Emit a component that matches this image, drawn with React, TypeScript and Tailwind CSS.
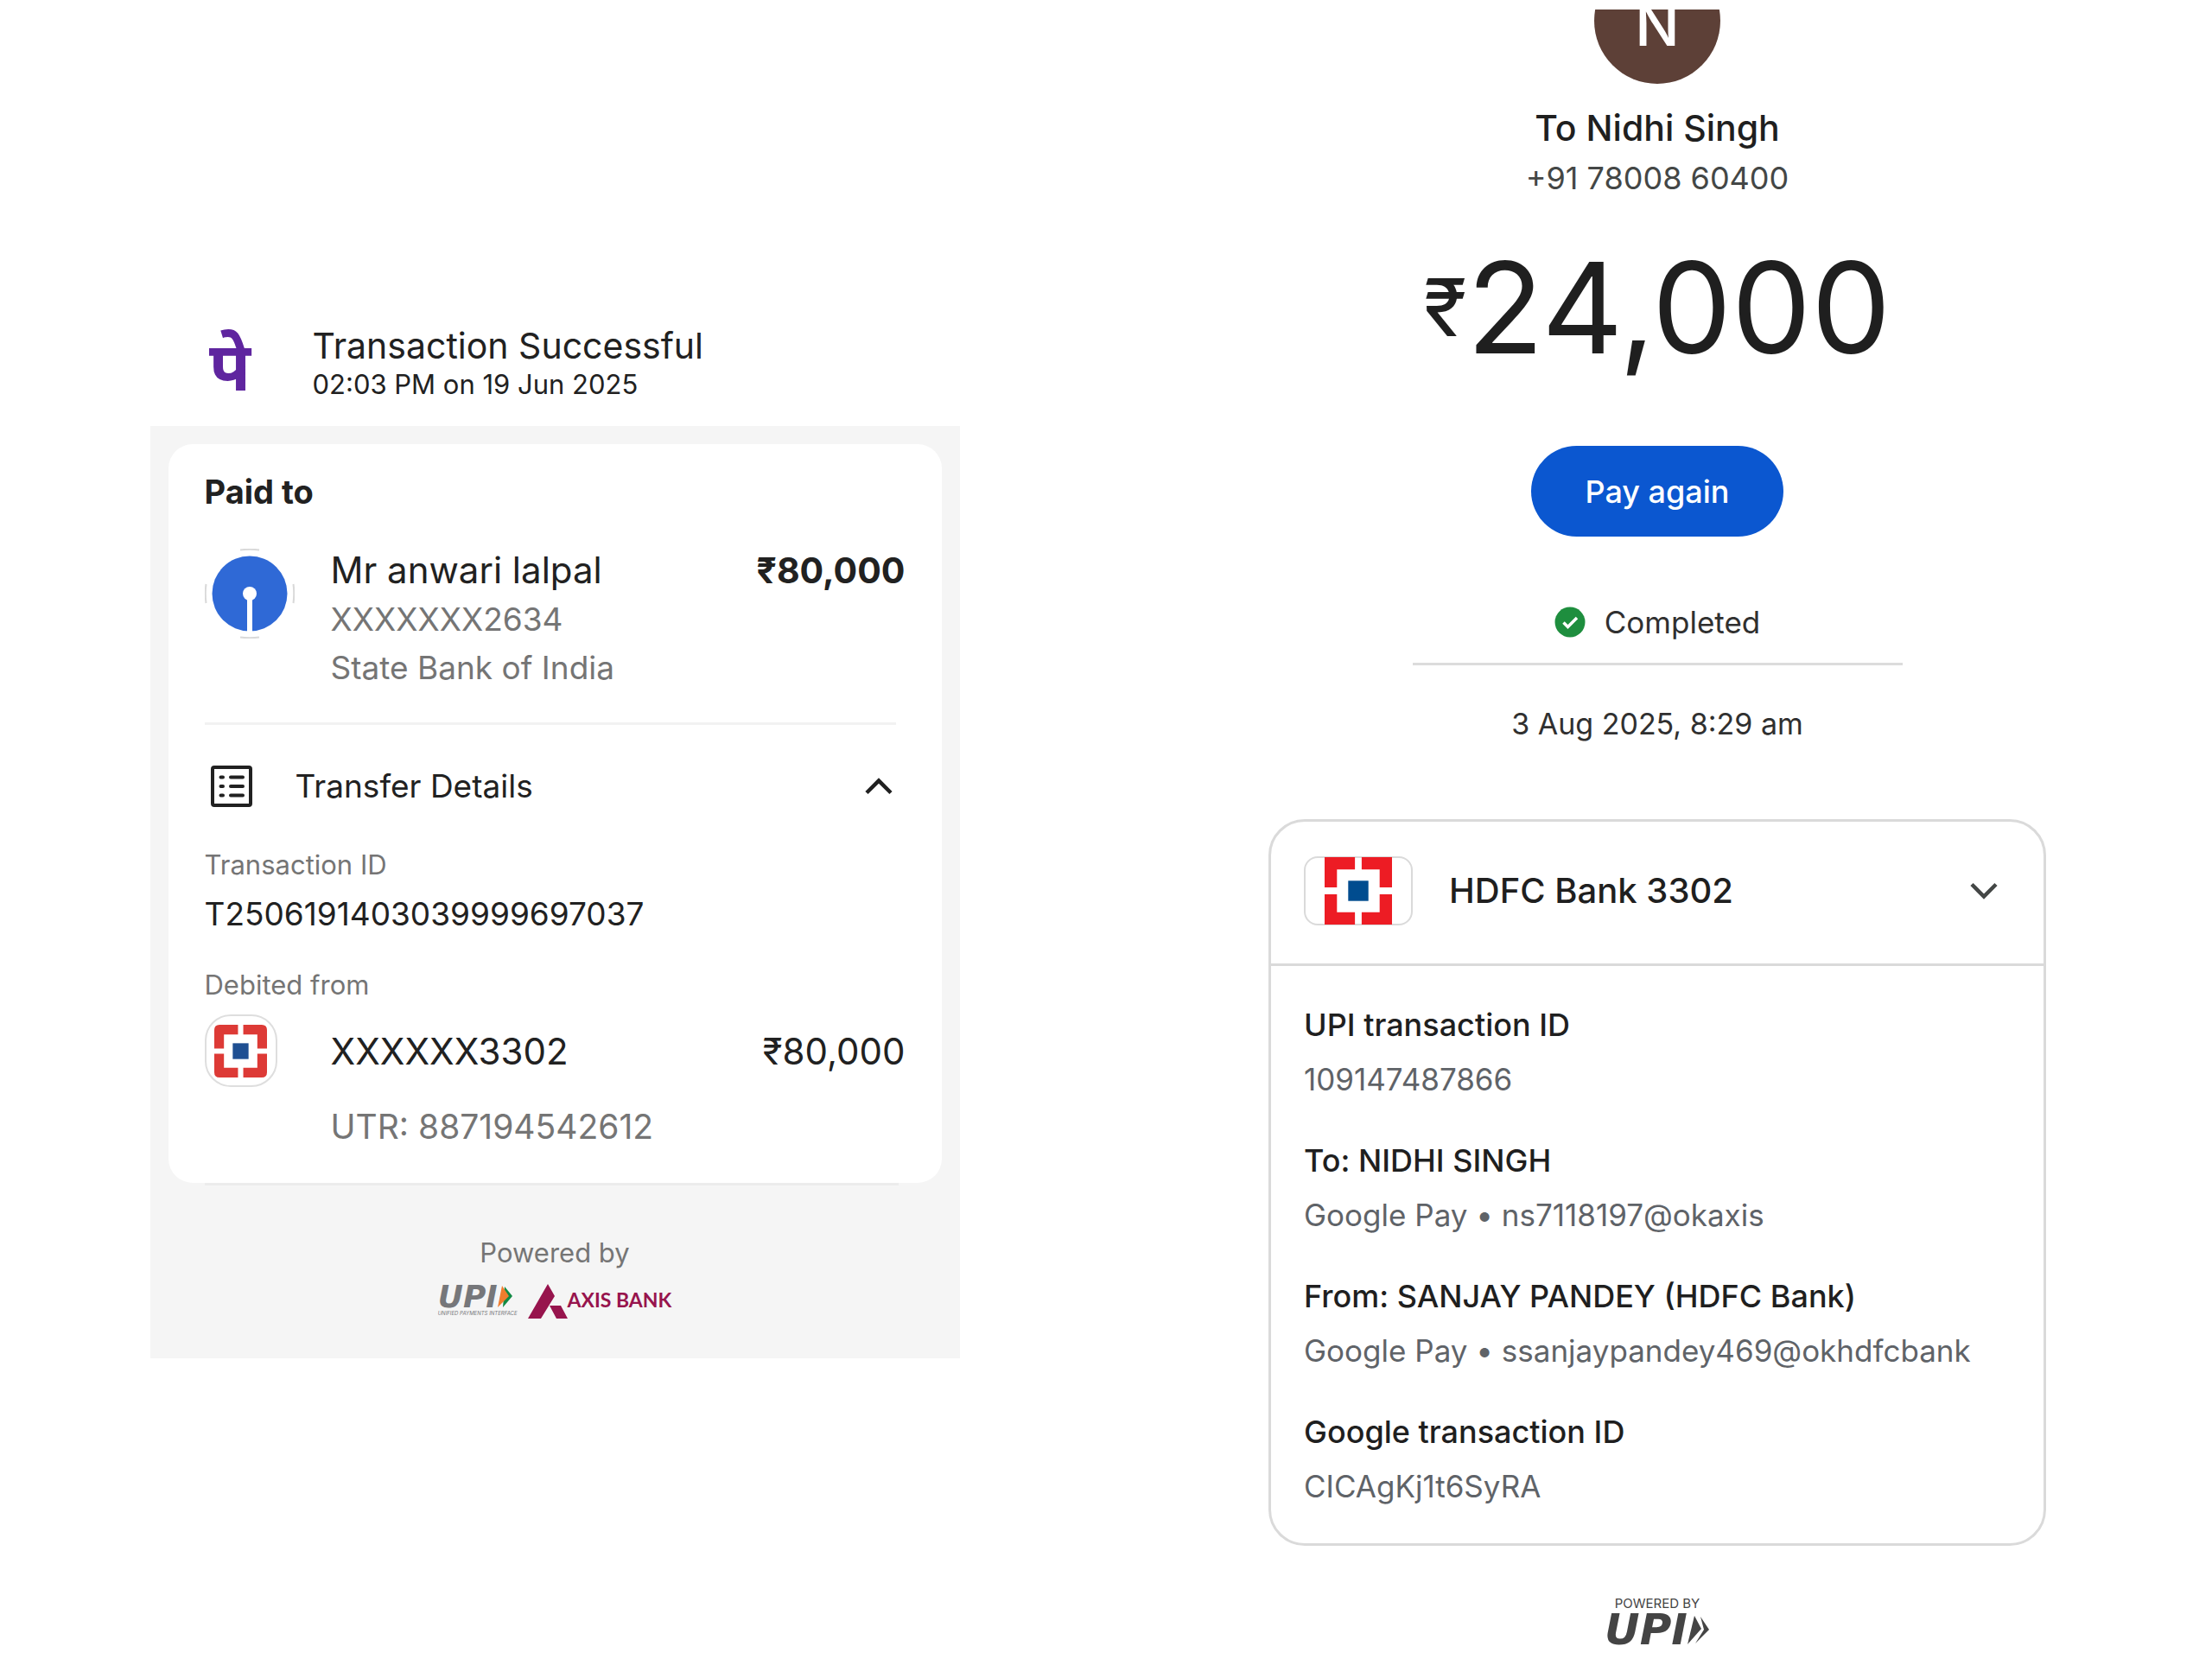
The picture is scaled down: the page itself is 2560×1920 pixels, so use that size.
import { useState } from "react";
import { clsx } from "clsx";

const GPAY_ROWS = [
  { label: "UPI transaction ID", value: "109147487866" },
  { label: "To: NIDHI SINGH", value: "Google Pay • ns7118197@okaxis" },
  { label: "From: SANJAY PANDEY (HDFC Bank)", value: "Google Pay • ssanjaypandey469@okhdfcbank" },
  { label: "Google transaction ID", value: "CICAgKj1t6SyRA" },
];

function HdfcMark({ red, blue, className, rounded = false }: { red: string; blue: string; className: string; rounded?: boolean }) {
  const r = rounded ? 6 : 0;
  const corner = `M0 27V${r}Q0 0 ${r} 0H27V11H11V27Z`;

  return (
    <svg viewBox="0 0 60 60" className={className} aria-hidden="true">
      {[0, 90, 180, 270].map((deg) => (
        <path key={deg} d={corner} fill={red} transform={`rotate(${deg} 30 30)`} />
      ))}
      <rect x="21" y="21" width="18" height="18" fill={blue} />
    </svg>
  );
}

function SbiLogo() {
  return (
    <svg viewBox="0 0 104 104" className="w-[104px] h-[104px] shrink-0" aria-hidden="true">
      <g fill="none" stroke="#d9d9d9" strokeWidth="2">
        <path d="M41 1.5Q52 0 63 1.5M41 102.5Q52 104 63 102.5M1.5 41Q0 52 1.5 63M102.5 41Q104 52 102.5 63" />
      </g>
      <circle cx="52" cy="52" r="43.5" fill="#2f69d6" />
      <circle cx="52" cy="52" r="8" fill="#fff" />
      <rect x="49" y="52" width="6" height="46" fill="#fff" />
    </svg>
  );
}

function ListIcon() {
  return (
    <svg viewBox="0 0 48 48" className="w-12 h-12 shrink-0" fill="none" stroke="#212121" aria-hidden="true">
      <rect x="2" y="2" width="44" height="44" rx="2" strokeWidth="4" />
      <path d="M23 13.5H37M23 24H37M23 34.5H37" strokeWidth="4" strokeLinecap="round" />
      <path d="M11.5 13.5H14M11.5 24H14M11.5 34.5H14" strokeWidth="4" strokeLinecap="round" />
    </svg>
  );
}

function Chevron({ up, color }: { up: boolean; color: string }) {
  return (
    <svg viewBox="0 0 34 20" className={clsx("w-[34px] h-5 shrink-0", !up && "rotate-180")} fill="none" aria-hidden="true">
      <path d="M3 17.5L17 3.5L31 17.5" stroke={color} strokeWidth="4.5" />
    </svg>
  );
}

function PhonePeReceipt() {
  const [open, setOpen] = useState(true);

  return (
    <section className="w-full max-w-[937px] pt-[375px] text-[#212121]">
      <header className="flex items-center gap-[57px] pl-[54px] pb-7">
        <span className="w-[77px] pt-1 text-center text-[78px] leading-[86px] font-bold text-[#5f259f] font-['Noto_Sans',sans-serif]">पे</span>
        <div>
          <h1 className="text-[41px] leading-[50px]">Transaction Successful</h1>
          <p className="text-[31px] leading-10">02:03 PM on 19 Jun 2025</p>
        </div>
      </header>

      <div className="bg-[#f5f5f5] px-[21px] pt-[21px] pb-[46px]">
        <div className="bg-white rounded-[28px] px-[42px] pt-[31px]">
          <h2 className="text-[38px] leading-[48px] font-bold">Paid to</h2>

          <div className="flex gap-[42px] mt-[38px]">
            <div className="pt-1">
              <SbiLogo />
            </div>
            <div className="flex-1 min-w-0 text-[37px] leading-[56px] text-[#757575]">
              <p className="text-[42px] text-[#212121] leading-[58px]">Mr anwari lalpal</p>
              <p>XXXXXXX2634</p>
              <p>State Bank of India</p>
            </div>
            <p className="text-[41px] leading-[58px] font-bold">₹80,000</p>
          </div>

          <div className="h-[3px] bg-[#f2f2f2] mt-[35px] mr-[11px]" />

          <button
            type="button"
            aria-expanded={open}
            onClick={() => setOpen(!open)}
            className="flex items-center w-full pl-[7px] pr-[14px] mt-[47px] text-left"
          >
            <ListIcon />
            <span className="flex-1 pl-[50px] text-[37px] leading-[48px]">Transfer Details</span>
            <Chevron up={open} color="#212121" />
          </button>

          {open && (
            <div className="pt-[47px]">
              <p className="text-[31px] leading-10 text-[#757575]">Transaction ID</p>
              <p className="text-[37px] leading-[48px] mt-[13px]">T2506191403039999697037</p>
              <p className="text-[31px] leading-10 text-[#757575] mt-[38px]">Debited from</p>

              <div className="flex items-center mt-[14px] text-[42px]">
                <span className="flex items-center justify-center w-[84px] h-[84px] rounded-[30px] border-2 border-[#dedede]">
                  <HdfcMark red="#dd3a36" blue="#1f4f92" className="w-[61px] h-[61px]" rounded />
                </span>
                <span className="flex-1 pl-[62px]">XXXXXX3302</span>
                <span>₹80,000</span>
              </div>
              <p className="text-[39px] leading-[48px] text-[#757575] pl-[146px] mt-[22px]">UTR: 887194542612</p>
            </div>
          )}
          <div className="h-[41px]" />
        </div>
        <div className="h-[3px] bg-[#ececec] ml-[42px] mr-[50px]" />

        <p className="text-[31px] leading-10 text-[#757575] text-center mt-[58px]">Powered by</p>
        <div className="flex items-center justify-center gap-3 mt-4">
          <div className="text-[#76777a]">
            <div className="flex items-center">
              <span className="text-[36px] leading-[28px] italic font-bold font-['DejaVu_Sans',sans-serif]">UPI</span>
              <svg viewBox="0 0 18 26" className="w-[18px] h-[26px]" aria-hidden="true">
                <path d="M8 1L17 12L6 25Z" fill="#118a44" />
                <path d="M5 0L13 12L0 25Z" fill="#f07d2e" />
              </svg>
            </div>
            <p className="text-[6px] leading-[10px] italic whitespace-nowrap">UNIFIED PAYMENTS INTERFACE</p>
          </div>
          <div className="flex items-center text-[#97144d]">
            <svg viewBox="0 0 46 40" className="w-[46px] h-10" fill="currentColor" aria-hidden="true">
              <path d="M23 0L31 14L15 40H0ZM25 25H38L46 40H33Z" />
            </svg>
            <span className="text-[23px] leading-7 pb-1 font-bold font-['Lato',sans-serif] whitespace-nowrap">AXIS BANK</span>
          </div>
        </div>
      </div>
    </section>
  );
}

function GooglePayReceipt() {
  const [open, setOpen] = useState(true);

  return (
    <section className="flex flex-col items-center w-full max-w-[900px] pt-[11px] text-[#1f1f1f]">
      <div className="flex flex-col justify-end h-[86px] overflow-hidden">
        <span className="flex items-center justify-center shrink-0 w-[146px] h-[146px] pt-2 rounded-full bg-[#5d4037] text-white text-[68px] leading-[68px] font-medium">
          N
        </span>
      </div>

      <h1 className="text-[41px] leading-[52px] font-medium mt-[25px]">To Nidhi Singh</h1>
      <p className="text-[36px] leading-[52px] text-[#444746] mt-[6px]">+91 78008 60400</p>

      <p className="flex items-center mt-11 text-[146px] leading-[160px]">
        <span className="text-[92px] leading-[160px]">₹</span>24,000
      </p>

      <button type="button" className="h-[105px] px-[62px] mt-20 rounded-full bg-[#0b57d0] text-white text-[36px] font-medium">
        Pay again
      </button>

      <p className="flex items-center gap-[22px] mt-[75px] text-[35px] leading-[48px] text-[#303030]">
        <svg viewBox="0 0 36 36" className="w-9 h-9" fill="none" aria-hidden="true">
          <circle cx="18" cy="18" r="17.5" fill="#1e8e3e" />
          <path d="M10.5 18.5L15.5 23.5L26 13" stroke="#fff" strokeWidth="3.5" />
        </svg>
        Completed
      </p>
      <div className="w-[63%] h-[3px] mt-[23px] bg-[#dcdcdc]" />
      <p className="mt-11 text-[34px] leading-[48px] text-[#303030]">3 Aug 2025, 8:29 am</p>

      <div className="w-full mt-[86px] border-3 border-[#dadada] rounded-[42px]">
        <button
          type="button"
          aria-expanded={open}
          onClick={() => setOpen(!open)}
          className="flex items-center w-full h-[164px] pl-[38px] pr-[52px] pb-[5px] text-left"
        >
          <span className="flex items-center justify-center w-[126px] h-20 rounded-2xl border-2 border-[#dadada]">
            <HdfcMark red="#ed1c24" blue="#004c8f" className="w-[78px] h-[78px] shrink-0" />
          </span>
          <span className="flex-1 pl-[42px] text-[40px] leading-[52px] font-medium">HDFC Bank 3302</span>
          <Chevron up={!open} color="#444746" />
        </button>

        {open && (
          <dl className="flex flex-col gap-[31px] pl-[38px] pr-6 pt-[37px] pb-[34px] border-t-3 border-[#dadada] text-[35px] leading-[63px]">
            {GPAY_ROWS.map((row) => (
              <div key={row.label}>
                <dt className="text-[36px] leading-[63px] font-medium">{row.label}</dt>
                <dd className="text-[#5f6368]">{row.value}</dd>
              </div>
            ))}
          </dl>
        )}
      </div>

      <footer className="flex flex-col items-center mt-[57px] text-[#444444]">
        <p className="text-[15px] leading-5">POWERED BY</p>
        <div className="flex items-center">
          <span className="text-[50px] leading-10 font-bold italic font-['DejaVu_Sans',sans-serif]">UPI</span>
          <svg viewBox="0 0 26 36" className="w-[26px] h-9" aria-hidden="true">
            <path d="M8 2L16 17L0 35Z" fill="currentColor" />
            <path d="M15 3L25 18L9 34L19 18Z" fill="currentColor" />
          </svg>
        </div>
      </footer>
    </section>
  );
}

export default function App() {
  return (
    <main className="grid grid-cols-2 min-h-screen bg-white font-['Inter',sans-serif]">
      <div className="flex justify-center pl-1">
        <PhonePeReceipt />
      </div>
      <div className="flex justify-center pr-1">
        <GooglePayReceipt />
      </div>
    </main>
  );
}
